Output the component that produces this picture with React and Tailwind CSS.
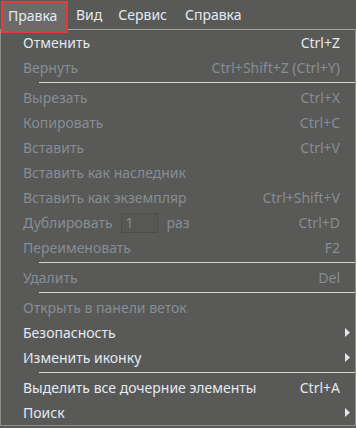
import React from "react";

const items = [
    { label: "Отменить", shortcut: "Ctrl+Z" },
    { label: "Вернуть", shortcut: "Ctrl+Shift+Z (Ctrl+Y)", disabled: true },
    { sep: true },
    { label: "Вырезать", shortcut: "Ctrl+X", disabled: true },
    { label: "Копировать", shortcut: "Ctrl+C", disabled: true },
    { label: "Вставить", shortcut: "Ctrl+V", disabled: true },
    { label: "Вставить как наследник", disabled: true },
    { label: "Вставить как экземпляр", shortcut: "Ctrl+Shift+V", disabled: true },
    { label: "Дублировать", shortcut: "Ctrl+D", disabled: true, count: true },
    { label: "Переименовать", shortcut: "F2", disabled: true },
    { sep: true },
    { label: "Удалить", shortcut: "Del", disabled: true },
    { sep: true },
    { label: "Открыть в панели веток", disabled: true },
    { label: "Безопасность", submenu: true },
    { label: "Изменить иконку", submenu: true },
    { sep: true },
    { label: "Выделить все дочерние элементы", shortcut: "Ctrl+A" },
    { label: "Поиск", submenu: true },
];

function Arrow() {
    return (
        <svg width="5" height="9" viewBox="0 0 5 9" className="block">
            <path d="M0 0 L5 4.5 L0 9 Z" fill="#e2e6ea" />
        </svg>
    );
}

function MenuRow({ item }) {
    const color = item.disabled ? "text-[#878d94]" : "text-[#e3eaf2]";
    return (
        <div className={`flex items-center h-[25px] pl-[22px] ${color}`}>
            <div className="flex-1 flex items-center whitespace-nowrap">
                <span>{item.label}</span>
                {item.count && (
                    <>
                        <span className="ml-[8px] w-[37px] h-[20px] border border-[#4c4c4a] bg-[#575755] pl-[4px] flex items-center leading-none">
                            1
                        </span>
                        <span className="ml-[9px]">раз</span>
                    </>
                )}
            </div>
            {item.shortcut && <span className="whitespace-nowrap">{item.shortcut}</span>}
            <div className="w-[15px] pl-[5px] flex items-center">{item.submenu && <Arrow />}</div>
        </div>
    );
}

export default function App() {
    return (
        <div className="w-[356px] h-[428px] overflow-hidden bg-[#595957] font-['Noto_Sans',sans-serif] text-[14px] leading-none">
            {/* Menu bar */}
            <div className="flex items-start h-[29px] text-[#e3eaf2]">
                <div className="relative z-10 ml-[1px] mt-[1px] w-[67px] h-[32px] border-[2px] border-[#e5393e] bg-[#6b6b69] pl-[5px] pt-[6px]">
                    Правка
                </div>
                <div className="px-[8px] pt-[8px]">Вид</div>
                <div className="px-[8px] pt-[8px]">Сервис</div>
                <div className="pl-[10px] pr-[8px] pt-[8px]">Справка</div>
            </div>

            {/* Dropdown */}
            <div className="border border-[#8d8d8b] border-t-[#a3a3a1]">
                {items.map((item, i) =>
                    item.sep ? (
                        <div key={i} className="h-[5px] flex items-center pl-[38px]">
                            <div className="flex-1 h-px bg-[#d4d4d2]" />
                        </div>
                    ) : (
                        <MenuRow key={i} item={item} />
                    )
                )}
            </div>
        </div>
    );
}
